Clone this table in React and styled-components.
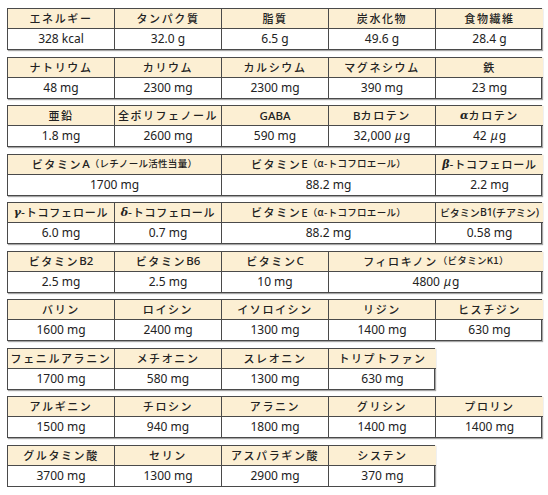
import React from 'react';
import styled, { createGlobalStyle } from 'styled-components';

const GlobalStyle = createGlobalStyle`
  body {
    margin: 0;
    background: #ffffff;
  }
`;

const Page = styled.div`
  padding: 8px 0 0 7px;
  display: flex;
  flex-direction: column;
  gap: 6.5px;
  width: 548px;
  box-sizing: border-box;
`;

const Table = styled.div`
  display: grid;
  grid-template-columns: repeat(${props => props.cols}, 107px);
  grid-template-rows: 20px 20px;
  width: ${props => props.cols * 107}px;
  border: 1px solid #4a4a4a;
  box-shadow: 1px 1px 1px rgba(0, 0, 0, 0.35);
  box-sizing: border-box;
`;

const Head = styled.div`
  grid-column: span ${props => props.span};
  background: #fcefd3;
  border-bottom: 1px solid #4a4a4a;
  border-right: ${props => (props.last ? 'none' : '1px solid #4a4a4a')};
  display: flex;
  align-items: center;
  justify-content: center;
  font-family: "Noto Sans CJK JP", "Noto Sans", sans-serif;
  font-weight: 500;
  font-size: ${props => props.size || '11px'};
  letter-spacing: ${props => props.spacing || '1.6px'};
  color: #222;
  white-space: nowrap;
  overflow: hidden;
  line-height: 1;
`;

const Small = styled.span`
  font-size: 9.5px;
  letter-spacing: 0.3px;
`;

const Latin = styled.span`
  letter-spacing: 0;
  font-family: "Noto Sans", sans-serif;
  font-size: ${props => props.size || '11.5px'};
`;

const Greek = styled.span`
  font-style: italic;
  font-weight: 700;
  font-family: "DejaVu Serif", serif;
  letter-spacing: 0;
`;

const Value = styled.div`
  grid-column: span ${props => props.span};
  border-right: ${props => (props.last ? 'none' : '1px solid #4a4a4a')};
  display: flex;
  align-items: center;
  justify-content: center;
  font-family: "Noto Sans", "Noto Sans CJK JP", sans-serif;
  font-size: 12px;
  color: #222;
  line-height: 1;
`;

const Mu = styled.span`
  font-style: italic;
  margin: 0 1px 0 4px;
`;

const ug = v => (
  <>
    {v}
    <Mu>μ</Mu>g
  </>
);

const blocks = [
  [
    { label: 'エネルギー', value: '328 kcal' },
    { label: 'タンパク質', value: '32.0 g' },
    { label: '脂質', value: '6.5 g' },
    { label: '炭水化物', value: '49.6 g' },
    { label: '食物繊維', value: '28.4 g' },
  ],
  [
    { label: 'ナトリウム', value: '48 mg' },
    { label: 'カリウム', value: '2300 mg' },
    { label: 'カルシウム', value: '2300 mg' },
    { label: 'マグネシウム', value: '390 mg' },
    { label: '鉄', value: '23 mg' },
  ],
  [
    { label: '亜鉛', value: '1.8 mg' },
    { label: '全ポリフェノール', value: '2600 mg', spacing: '1.5px' },
    { label: <Latin>GABA</Latin>, value: '590 mg' },
    { label: <><Latin>B</Latin>カロテン</>, value: ug('32,000') },
    { label: <><Greek>α</Greek>カロテン</>, value: ug('42') },
  ],
  [
    { label: <>ビタミン<Latin>A</Latin><Small>（レチノール活性当量）</Small></>, value: '1700 mg', span: 2 },
    { label: <>ビタミン<Latin>E</Latin><Small>（α-トコフロエール）</Small></>, value: '88.2 mg', span: 2 },
    { label: <><Greek>β</Greek>-トコフェロール</>, value: '2.2 mg', spacing: '0.8px' },
  ],
  [
    { label: <><Greek>γ</Greek>-トコフェロール</>, value: '6.0 mg', spacing: '0.8px' },
    { label: <><Greek>δ</Greek>-トコフェロール</>, value: '0.7 mg', spacing: '0.8px' },
    { label: <>ビタミン<Latin>E</Latin><Small>（α-トコフロエール）</Small></>, value: '88.2 mg', span: 2 },
    {
      label: <>ビタミン<Latin size="10.5px">B1(</Latin>チアミン<Latin size="10.5px">)</Latin></>,
      value: '0.58 mg',
      spacing: '0',
      size: '10px',
    },
  ],
  [
    { label: <>ビタミン<Latin>B2</Latin></>, value: '2.5 mg' },
    { label: <>ビタミン<Latin>B6</Latin></>, value: '2.5 mg' },
    { label: <>ビタミン<Latin>C</Latin></>, value: '10 mg' },
    { label: <>フィロキノン<Small>（ビタミンK1）</Small></>, value: ug('4800'), span: 2 },
  ],
  [
    { label: 'バリン', value: '1600 mg' },
    { label: 'ロイシン', value: '2400 mg' },
    { label: 'イソロイシン', value: '1300 mg' },
    { label: 'リジン', value: '1400 mg' },
    { label: 'ヒスチジン', value: '630 mg' },
  ],
  [
    { label: 'フェニルアラニン', value: '1700 mg' },
    { label: 'メチオニン', value: '580 mg' },
    { label: 'スレオニン', value: '1300 mg' },
    { label: 'トリプトファン', value: '630 mg' },
  ],
  [
    { label: 'アルギニン', value: '1500 mg' },
    { label: 'チロシン', value: '940 mg' },
    { label: 'アラニン', value: '1800 mg' },
    { label: 'グリシン', value: '1400 mg' },
    { label: 'プロリン', value: '1400 mg' },
  ],
  [
    { label: 'グルタミン酸', value: '3700 mg' },
    { label: 'セリン', value: '1300 mg' },
    { label: 'アスパラギン酸', value: '2900 mg' },
    { label: 'システン', value: '370 mg' },
  ],
];

const NutrientTable = ({ items }) => {
  const cols = items.reduce((n, it) => n + (it.span || 1), 0);
  return (
    <Table cols={cols}>
      {items.map((it, i) => (
        <Head
          key={'h' + i}
          span={it.span || 1}
          last={i === items.length - 1}
          spacing={it.spacing}
          size={it.size}
        >
          {it.label}
        </Head>
      ))}
      {items.map((it, i) => (
        <Value key={'v' + i} span={it.span || 1} last={i === items.length - 1}>
          {it.value}
        </Value>
      ))}
    </Table>
  );
};

const App = () => (
  <>
    <GlobalStyle />
    <Page>
      {blocks.map((items, i) => (
        <NutrientTable key={i} items={items} />
      ))}
    </Page>
  </>
);

export default App;
